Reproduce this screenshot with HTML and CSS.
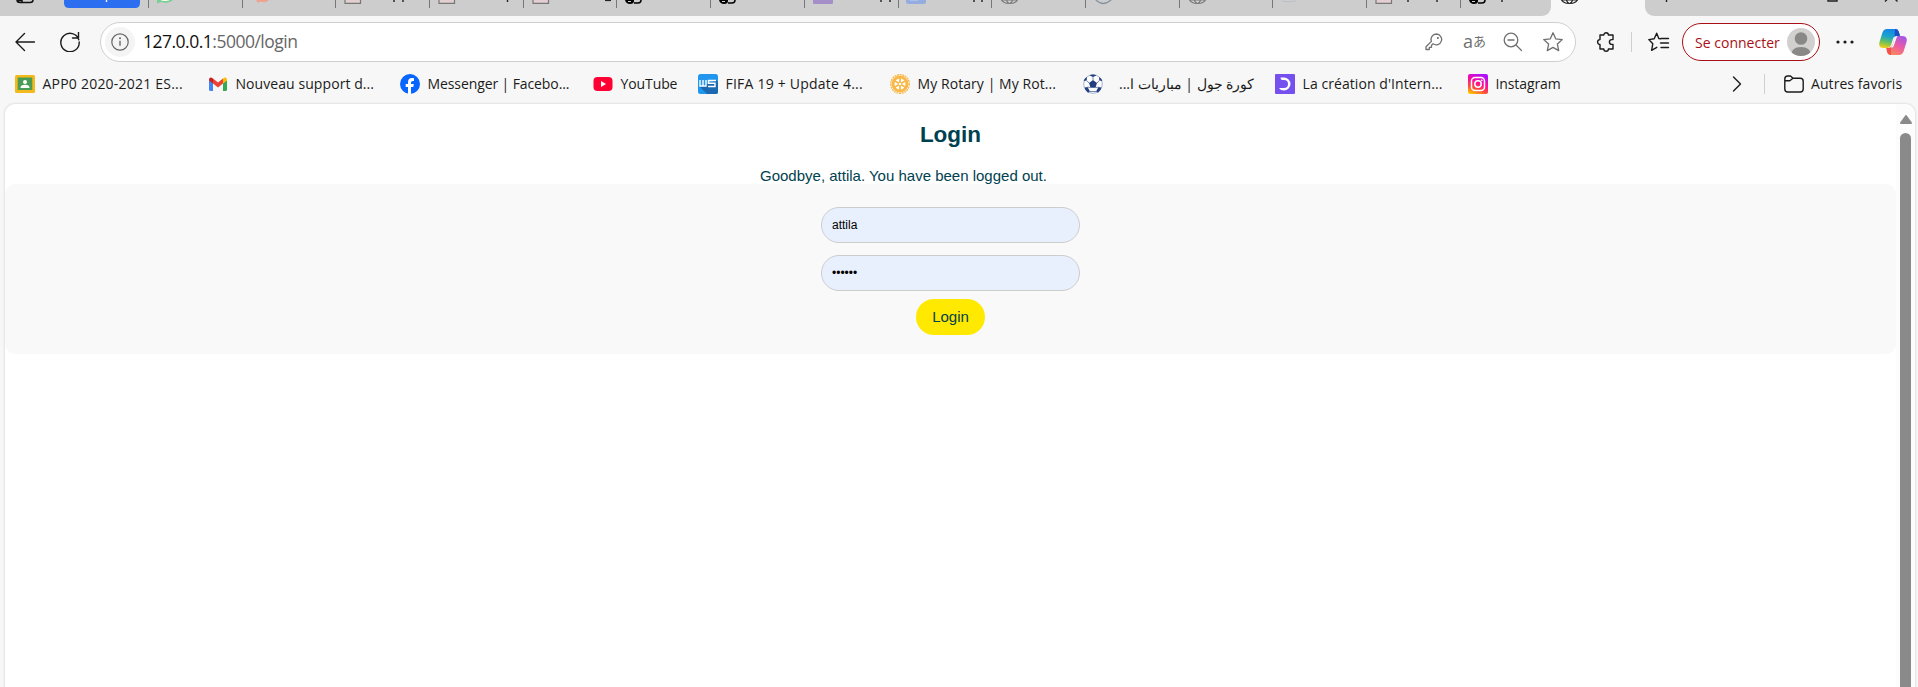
FILE: index.html
```html
<!DOCTYPE html>
<html lang="fr">
<head>
<meta charset="utf-8">
<title>Login</title>
<link rel="stylesheet" href="styles.css">
</head>
<body>
<svg class="defs" width="0" height="0" aria-hidden="true">
  <defs>
    <symbol id="doc" viewBox="0 0 94 16"><path d="M10-8v11.3h15.5V-8" fill="#e3cfd2" stroke="#777" stroke-width="1.2"/></symbol>
    <symbol id="cap" viewBox="0 0 94 16"><path d="M9-2h9v3q0 3-4 3T9 0Z" fill="#000"/><path d="M12 1.500h3" stroke="#ccc"/><path d="M18 3h4q3 0 3-3" fill="none" stroke="#000" stroke-width="1.500"/></symbol>
    <symbol id="globe" viewBox="0 0 94 16"><path d="M10-2a8.500 5.500 0 0 0 17 0M15-2q1 5.500 3.500 5.500T22-2M10.500 0h16" fill="none" stroke="currentColor" stroke-width="1.200"/></symbol>
  </defs>
</svg>
<header class="browser">
  <div class="tabs">
    <div class="strip">
      <div class="tab-start">
        <svg width="148" height="16" viewBox="0 0 148 16"><path d="M17 0q0 2.500 3 2.500h10q3 0 3-2.500M22 0v2M17 .5h5" fill="none" stroke="#111" stroke-width="1.500"/><path d="M64 0h76v3q0 5-5 5H69q-5 0-5-5Z" fill="#2b6ff0"/><path d="M106.500 0v2" stroke="#fff" stroke-width="1.400"/></svg>
      </div>
      <div class="tab"><svg viewBox="0 0 94 16"><path d="M9 0h16q-4 4-12 2l-4 1.500Z" fill="#78cf91"/><path d="M13 0q4 1 8 0" stroke="#fff" fill="none"/></svg></div>
      <div class="tab"><svg viewBox="0 0 94 16"><path d="M14 0h13q-3 3-6 2t-5 1Z" fill="#efa391"/></svg></div>
      <div class="tab"><svg viewBox="0 0 94 16"><use href="#doc"/><path d="M59 0v2M68 0v2" class="mark"/></svg></div>
      <div class="tab"><svg viewBox="0 0 94 16"><use href="#doc"/><path d="M78.500 0v2" class="mark"/></svg></div>
      <div class="tab"><svg viewBox="0 0 94 16"><use href="#doc"/><path d="M82 .4h6" class="mark"/></svg></div>
      <div class="tab"><svg viewBox="0 0 94 16"><use href="#cap"/></svg></div>
      <div class="tab"><svg viewBox="0 0 94 16"><use href="#cap"/></svg></div>
      <div class="tab"><svg viewBox="0 0 94 16"><path d="M9-2h20v5q0 1-1 1H10q-1 0-1-1Z" fill="#a48fc9"/><path d="M77 0v2M86 0v2" class="mark"/></svg></div>
      <div class="tab"><svg viewBox="0 0 94 16"><path d="M8-2h20v4q0 2-2 2H10q-2 0-2-2Z" fill="#94ade0"/><path d="M12 0h8" stroke="#c3d2f1"/><path d="M76 0v2M84 0v2" class="mark"/></svg></div>
      <div class="tab grey"><svg viewBox="0 0 94 16"><use href="#globe"/></svg></div>
      <div class="tab"><svg viewBox="0 0 94 16"><path d="M10-1q8 9 17 0" fill="none" stroke="#8494a3" stroke-width="1.300"/></svg></div>
      <div class="tab grey"><svg viewBox="0 0 94 16"><use href="#globe"/></svg></div>
      <div class="tab"><svg viewBox="0 0 94 16"><path d="M11-2v3.500h12V-2" fill="none" stroke="#bbbfc6"/></svg></div>
      <div class="tab"><svg viewBox="0 0 94 16"><use href="#doc"/><path d="M42 0v2M71 0v2" class="mark"/></svg></div>
      <div class="tab"><svg viewBox="0 0 94 16"><use href="#cap"/><path d="M42 0v2" class="mark"/></svg></div>
    </div>
    <div class="tab-active"><svg viewBox="0 0 94 16"><use href="#globe"/></svg></div>
    <div class="strip-end"><svg width="273" height="16" viewBox="0 0 273 16"><path d="M21.500 0v2M240 1.500L245-3.500M252.500 1.500L247.500-3.500" class="mark"/><path d="M183 0v1h9V0" class="mark" fill="none"/></svg></div>
  </div>

  <div class="toolbar">
    <svg class="back" width="20" height="20" viewBox="0 0 20 20"><path d="M9.500 1.500L1 10l8.500 8.500M1 10h18.500" class="line"/></svg>
    <svg class="reload" width="20" height="20" viewBox="0 0 20 20"><path d="M18.800 7.800A9.200 9.200 0 1 0 19.200 10M18.500 0v6h-6" class="line"/></svg>
    <div class="address">
      <span class="info"><svg width="18" height="18" viewBox="0 0 18 18"><circle cx="9" cy="9" r="8.200" fill="none" stroke="#666" stroke-width="1.200"/><path d="M9 7.800v5" stroke="#666" stroke-width="1.400"/><circle cx="9" cy="5.300" r="1" fill="#666"/></svg></span>
      <span class="url"><b>127.0.0.1</b>:5000/login</span>
      <span class="address-icons">
        <svg width="18" height="18" viewBox="0 0 18 18"><path d="M11.400 1a5.400 5.400 0 0 0-5 7.400L1 13.700V16.500h3.300v-2.200h2.200v-2.100l1.600-1.400A5.400 5.400 0 1 0 11.400 1Z" class="soft"/><circle cx="12.900" cy="4.900" r="1" fill="#666"/></svg>
        <span class="translate">a<i>あ</i></span>
        <svg width="20" height="20" viewBox="0 0 20 20"><circle cx="8" cy="8" r="6.800" class="soft"/><path d="M5 8h6M13 13l5.500 5.500" class="soft"/></svg>
        <svg width="22" height="22" viewBox="0 0 22 22"><path d="M11 1.800l2.700 6 6.600.8-4.900 4.500 1.300 6.500-5.700-3.200-5.700 3.200 1.300-6.500-4.900-4.500 6.600-.8Z" class="soft"/></svg>
      </span>
    </div>
    <svg class="puzzle" width="20" height="20" viewBox="0 0 20 20"><path d="M4 3h3.800a2.300 2.300 0 0 1 4.600 0H17V7.600h-1.200a2.300 2.300 0 0 0 0 4.800H17V17h-4.600a2.300 2.300 0 0 1-4.600 0H4V12.400a2.400 2.400 0 0 1 0-4.800Z" class="line"/></svg>
    <span class="rule"></span>
    <svg class="favs" width="22" height="20" viewBox="0 0 22 20"><path d="M12.500 6.800L10.800 6.500 8.700 1.200 6.200 6.800.8 7.600l4 4.200-1.200 6.500 5.200-3M13 6.500h7.500M12.500 11h8M13 15.500h7.500" class="line"/></svg>
    <div class="signin"><span>Se connecter</span><svg width="28" height="28" viewBox="0 0 28 28"><clipPath id="face"><circle cx="14" cy="14" r="14"/></clipPath><g clip-path="url(#face)"><path d="M0 0h28v28H0Z" fill="#d2d0ce"/><circle cx="14" cy="10.500" r="6.300" fill="#8a8886"/><path d="M4 28q0-9 10-9t10 9Z" fill="#8a8886"/></g></svg></div>
    <svg class="dots" width="18" height="6" viewBox="0 0 18 6"><g fill="#1b1b1b"><circle cx="2" cy="3" r="1.600"/><circle cx="9" cy="3" r="1.600"/><circle cx="16" cy="3" r="1.600"/></g></svg>
    <svg class="copilot" width="28" height="26" viewBox="0 0 28 26">
      <defs>
        <linearGradient id="c1" x1=".5" y1="0" x2=".3" y2="1"><stop offset="0" stop-color="#1684e8"/><stop offset=".4" stop-color="#1ba5c9"/><stop offset=".7" stop-color="#6cc05b"/><stop offset="1" stop-color="#f4cc16"/></linearGradient>
        <linearGradient id="c2" x1=".8" y1="0" x2=".3" y2="1"><stop offset="0" stop-color="#a257e8"/><stop offset=".5" stop-color="#ea5aa6"/><stop offset="1" stop-color="#fb8a55"/></linearGradient>
      </defs>
      <path d="M8 0h8.500q2.500 0 3.300 2.800l1.200 4h-3q-3 0-4 3l-2 6.500q-.8 2.700-3.500 2.700H5q-6 0-4.500-6L3.300 4Q4.500 0 8 0Z" fill="url(#c1)"/>
      <path d="M20 26h-8.500q-2.500 0-3.300-2.800L7.500 19h2q3 0 4-3l2-6.500Q16.500 7 19 7h4q6 0 4.500 6L24.700 22Q23.500 26 20 26Z" fill="url(#c2)"/>
      <path d="M16 0h.8q2.300 0 3 2.800L21 7h-3q-1.500 0-2.500 1Z" fill="#1c4fc4"/>
      <path d="M12 26h-.8q-2.300 0-3-2.800L7.300 19h2.200q1.500 0 2.700-1Z" fill="#f5524e"/>
      <path d="M15.700 8.800q.8-1.800 2.500-1.800l-3.600 10.300q-.8 1.700-3 1.700 1.300-.6 1.900-2.600Z" fill="#fff"/>
    </svg>
  </div>

  <nav class="bookmarks">
    <a class="wide"><svg viewBox="0 0 20 20"><rect y="1" width="20" height="18" rx="1.500" fill="#f4b91c"/><rect x="2.700" y="3.500" width="14.600" height="12.500" fill="#4a9c55"/><circle cx="10" cy="8" r="2" fill="#fff"/><path d="M5.500 14q0-3.200 4.500-3.200t4.500 3.200Z" fill="#fff"/></svg><span>APP0 2020-2021 ES...</span></a>
    <a><svg viewBox="0 0 20 20"><path d="M1 6l4 3v8H2.500Q1 17 1 15.500Z" fill="#4285f4"/><path d="M15 9l4-3v9.500q0 1.500-1.500 1.500H15Z" fill="#34a853"/><path d="M5 4.500l5 4 5-4V9.500l-5 4-5-4Z" fill="#ea4335"/><path d="M1 5.500Q1.500 2.200 5 4.500v5L1 6.500Z" fill="#c5221f"/><path d="M19 5.500Q18.500 2.200 15 4.500v5l4-3Z" fill="#fbbc04"/></svg><span>Nouveau support d...</span></a>
    <a class="tight"><svg viewBox="0 0 20 20"><circle cx="10" cy="10" r="10" fill="#0866ff"/><path d="M8 20v-7H5.700v-3H8V8.300Q8 4 12 4q1.300 0 2 .3V7h-1.300Q11 7 11 8.600V10h2.800l-.5 3H11v7Z" fill="#fff"/></svg><span>Messenger | Facebo...</span></a>
    <a class="tight"><svg viewBox="0 0 20 20"><rect x=".5" y="3" width="19" height="14" rx="4" fill="#ff0033"/><path d="M8 7l5 3-5 3Z" fill="#fff"/></svg><span>YouTube</span></a>
    <a class="wide"><svg viewBox="0 0 20 20"><rect width="20" height="20" rx="2.500" fill="#2196ee"/><path d="M2 13L18 6l2 2v10q0 2-2 2H9Z" fill="#1b69b1"/><path d="M2 6v6h6V6M5 6v6M18 6.500h-7.500v2.800H17V12.500h-7" fill="none" stroke="#fff" stroke-width="1.400"/></svg><span>FIFA 19 + Update 4...</span></a>
    <a><svg viewBox="0 0 20 20"><circle cx="10" cy="10" r="9.300" fill="#fff" stroke="#f8b84a" stroke-width="1.300" stroke-dasharray="2 .7"/><circle cx="10" cy="10" r="7" fill="#fff" stroke="#f8b84a" stroke-width="3"/><path d="M10 3v14M4 6.500l12 7M16 6.500l-12 7" stroke="#f8b84a" stroke-width="1.800"/><circle cx="10" cy="10" r="1.800" fill="#fff" stroke="#f8b84a"/></svg><span>My Rotary | My Rot...</span></a>
    <a class="arabic"><svg viewBox="0 0 20 20"><circle cx="10" cy="10" r="9.300" fill="#fff" stroke="#8ba0c8" stroke-width=".8"/><path d="M10 6l4 3-1.500 4.700h-5L6 9ZM6.500 1.500L10 3l3.500-1.500Q10-.5 6.500 1.500ZM.7 7l3-.5L4 3Q1 4.500.7 7ZM19.300 7l-3-.5L16 3q3 1.500 3.300 4ZM1.500 13.500l3-.5L7 17.500l-2 1.200q-3-2-3.500-5.200ZM18.500 13.500l-3-.5-2.500 4.500 2 1.200q3-2 3.500-5.200Z" fill="#233f7f"/><path d="M10 3v3M3.700 6.500L6 9M16.300 6.500L14 9M4.500 13l3 .7M15.500 13l-3 .7M7 17.500h6" stroke="#526a9c" stroke-width=".8"/></svg><span dir="rtl">كورة جول | مباريات ا...</span></a>
    <a><svg viewBox="0 0 20 20"><rect width="20" height="20" rx="1" fill="#7650ee"/><path d="M5.500 3.500H9a6.500 6.500 0 0 1 0 13q-3.500 0-5-2.500h5a4 4 0 0 0 0-8H7.500q-2 0-2-2.500Z" fill="#fff"/></svg><span>La création d'Intern...</span></a>
    <a class="tight"><svg viewBox="0 0 20 20"><defs><linearGradient id="ig" x1=".2" y1="1" x2=".6" y2="0"><stop offset="0" stop-color="#ffc400"/><stop offset=".3" stop-color="#ff4a3d"/><stop offset=".6" stop-color="#ff0c98"/><stop offset="1" stop-color="#b010ff"/></linearGradient></defs><rect width="20" height="20" rx="2" fill="url(#ig)"/><rect x="3.500" y="3.500" width="13" height="13" rx="3.500" fill="none" stroke="#fff" stroke-width="1.500"/><circle cx="10" cy="10" r="3.200" fill="none" stroke="#fff" stroke-width="1.500"/><circle cx="13.700" cy="6.300" r=".9" fill="#fff"/></svg><span>Instagram</span></a>
    <div class="more">
      <svg width="10" height="16" viewBox="0 0 10 16"><path d="M1.500 1l7 7-7 7" class="line"/></svg>
      <span class="rule"></span>
      <svg width="20" height="18" viewBox="0 0 20 18"><path d="M.8 4q0-3 3-3h2.700L9 3.300h7.200q3 0 3 3V14q0 3-3 3H3.800q-3 0-3-3ZM.8 5.800h5L9 3.300" class="line"/></svg>
      <span class="others">Autres favoris</span>
    </div>
  </nav>
</header>

<div class="frame">
  <main class="page">
    <h1>Login</h1>
    <p class="flash">Goodbye, attila. You have been logged out.</p>
    <form class="login">
      <input type="text" value="attila" aria-label="Username">
      <div class="field">••••••</div>
      <button type="button">Login</button>
    </form>
  </main>
  <aside class="scroll">
    <svg width="14" height="11" viewBox="0 0 14 11"><path d="M7 2L12 9H2Z" fill="#8a8a8a" stroke="#8a8a8a" stroke-width="2" stroke-linejoin="round"/></svg>
    <div class="thumb"></div>
  </aside>
</div>
</body>
</html>
```

FILE: styles.css
```css
* { box-sizing: border-box; }
body { margin: 0; height: 687px; overflow: hidden; display: flex; flex-direction: column; background: #f7f7f7; color: #1b1b1b; font-family: "Open Sans", "Noto Sans", sans-serif; }
svg { display: block; flex: none; }
.defs { position: absolute; }
.line { fill: none; stroke: #1b1b1b; stroke-width: 1.4; stroke-linecap: round; stroke-linejoin: round; }
.soft { fill: none; stroke: #707070; stroke-width: 1.3; stroke-linecap: round; stroke-linejoin: round; }
.mark { stroke: #222; stroke-width: 1.4; }

.browser { height: 104px; flex: none; }
.tabs { height: 16px; display: flex; background: #f7f7f7; }
.strip { width: 1551px; display: flex; background: #cdcdcd; border-bottom-right-radius: 9px; overflow: hidden; }
.tab-start { width: 148px; flex: none; }
.tab { width: 93.7px; flex: none; height: 16px; background: linear-gradient(#777, #777) no-repeat 0 0 / 1px 8px; }
.tab svg, .tab-active svg { width: 94px; height: 16px; }
.grey { color: #7b7b7b; }
.tab-active { width: 94px; color: #222; }
.strip-end { flex: 1; background: #cdcdcd; border-bottom-left-radius: 9px; }

.toolbar { height: 52px; display: flex; align-items: center; padding-left: 15px; }
.reload { margin-left: 25px; }
.address { width: 1476px; height: 40px; margin-left: 20px; border: 1px solid #cfcfcf; border-radius: 20px; background: #fff; display: flex; align-items: center; padding: 0 11px 0 4px; }
.info { width: 30px; height: 30px; border-radius: 50%; background: #f4f4f4; display: grid; place-items: center; }
.url { margin-left: 8px; padding-bottom: 2px; font-size: 17.5px; letter-spacing: -.5px; color: #666; }
.url b { font-weight: 400; color: #111; }
.address-icons { margin-left: auto; display: flex; align-items: center; }
.translate { width: 22px; margin: 0 18px 0 20px; padding-bottom: 2px; font-size: 18px; line-height: 24px; color: #707070; display: flex; align-items: center; }
.translate i { font: 13px/24px "Noto Sans CJK JP", sans-serif; }
.address-icons svg:last-child { margin-left: 19px; }
.puzzle { margin-left: 20px; }
.rule { width: 1px; height: 20px; background: #cfcfcf; }
.toolbar .rule { margin-left: 15px; }
.favs { margin-left: 16px; }
.signin { width: 138px; height: 38px; margin-left: 12px; border: 1.5px solid #a80f16; border-radius: 19px; display: flex; align-items: center; justify-content: space-between; padding: 0 4px 0 12px; background: #fff; color: #a80f16; font-size: 14px; letter-spacing: .02px; }
.dots { margin-left: 16px; }
.copilot { margin-left: 25px; }

.bookmarks { height: 32px; padding-left: 15px; display: grid; grid-template-columns: 193px 192px 193px 105px 192px 193px 192px 193px 120px 1fr; align-items: center; font-size: 14px; letter-spacing: .07px; white-space: nowrap; }
.bookmarks a { display: flex; align-items: center; }
.bookmarks a svg { width: 20px; height: 20px; margin-right: 7.5px; }
.bookmarks a span, .others { padding-bottom: 2px; }
.bookmarks .wide { letter-spacing: .22px; }
.bookmarks .tight { letter-spacing: -.1px; }
.bookmarks .arabic svg { margin-right: 16px; }
.more { display: flex; align-items: center; padding-left: 144px; }
.more .rule { margin: 0 19px 0 22px; }
.others { margin-left: 7px; }

.frame { flex: 1; margin: 0 3px 0 5px; display: flex; background: #fff; border-radius: 10px 10px 0 0; overflow: hidden; box-shadow: 0 0 2px 1px #e2e2e2; }
.page { width: 1891px; display: flex; flex-direction: column; align-items: center; font-family: "Liberation Sans", Arial, sans-serif; color: #00414f; }
h1 { margin: 18px 0 0; font-size: 22.5px; line-height: 26px; }
.flash { width: 381px; margin: 19px 0 0; font-size: 15px; line-height: 17px; }
.login { width: 100%; height: 170px; padding-top: 23px; background: #f9f9f9; border-radius: 10px; display: flex; flex-direction: column; align-items: center; }
input, .field { width: 259px; height: 36px; margin: 0 0 12px; padding: 0 10px; border: 1px solid #ccc; border-radius: 18px; background: #e8f0fe; color: #000; font: 12px/34px "Liberation Sans", Arial, sans-serif; }
.login .field { margin-bottom: 8px; }
button { width: 69px; height: 36px; padding: 0 0 2px; border: 0; border-radius: 18px; background: #ffe900; color: #00414f; font: 15px "Liberation Sans", Arial, sans-serif; }
.scroll { flex: 1; display: flex; flex-direction: column; align-items: flex-start; padding-top: 10px; background: #fcfcfc; }
.scroll svg { margin-left: 3px; }
.thumb { width: 11px; flex: 1; margin: 8px 0 0 4px; border-radius: 6px 6px 0 0; background: #8a8a8a; }
```
